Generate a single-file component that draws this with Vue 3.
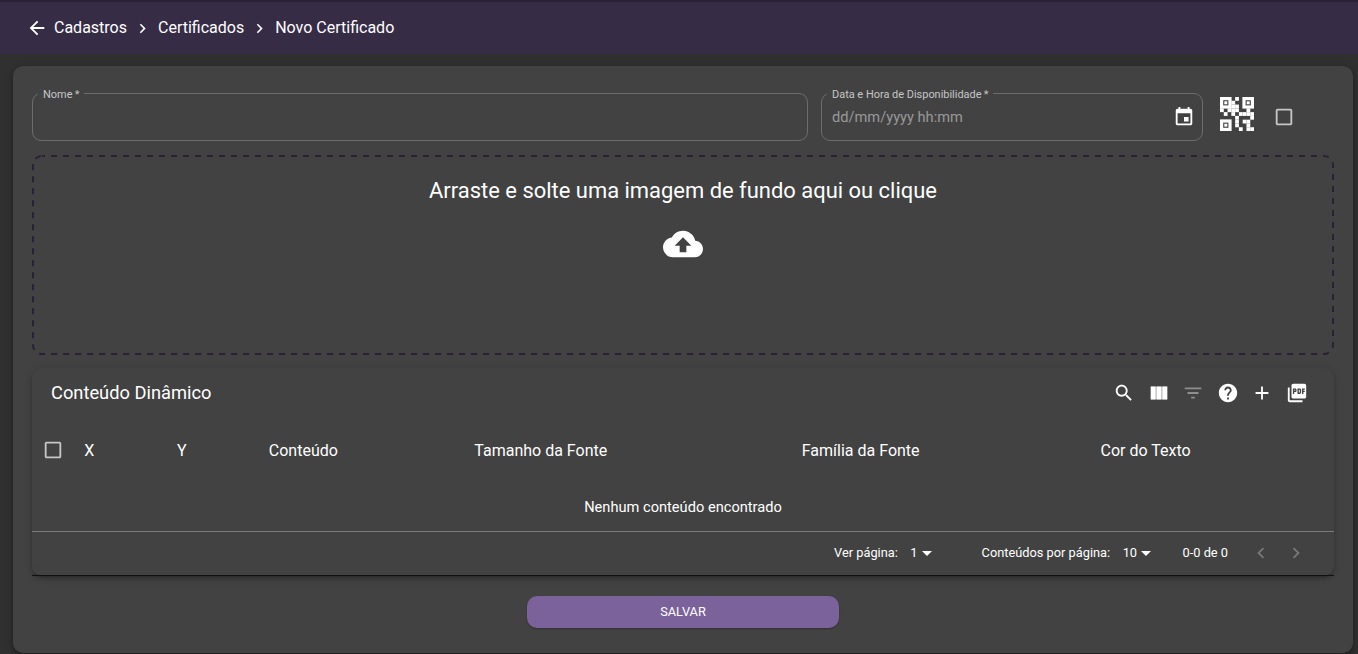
<script setup>
const crumbs = ['Cadastros', 'Certificados', 'Novo Certificado']
const finders = [[0, 0], [22.4, 0], [0, 22.4]]
// Filled QR modules on a 9 x 9 grid, outside the three finder squares
const modules = [
  [4, 0], [3, 1], [3, 2], [4, 2],
  [0, 3], [2, 3], [3, 3], [4, 3], [7, 3],
  [1, 4], [3, 4], [5, 4], [6, 4], [7, 4], [8, 4],
  [4, 5], [8, 5], [4, 6], [6, 6], [7, 6],
  [4, 7], [7, 7], [5, 8], [7, 8], [8, 8]
]
const columns = ['X', 'Y', 'Conteúdo', 'Tamanho da Fonte', 'Família da Fonte', 'Cor do Texto']
const box = 'M19 5v14H5V5h14m0-2H5c-1.100 0-2 .9-2 2v14c0 1.100.9 2 2 2h14c1.100 0 2-.9 2-2V5c0-1.100-.9-2-2-2z'
const tools = [
  { d: 'M15.500 14h-.79l-.28-.27C15.410 12.590 16 11.110 16 9.500 16 5.910 13.090 3 9.500 3S3 5.910 3 9.500 5.910 16 9.500 16c1.610 0 3.090-.59 4.230-1.570l.27.28v.79l5 4.990L20.490 19l-4.990-5zm-6 0C7.010 14 5 11.990 5 9.500S7.010 5 9.500 5 14 7.010 14 9.500 11.990 14 9.500 14z' },
  { d: 'M3 5v14h5.330V5H3zM9.330 5v14h5.330V5H9.330zM15.660 5v14H21V5h-5.340z', columns: true },
  { d: 'M10 18h4v-2h-4v2zM3 6v2h18V6H3zm3 7h12v-2H6v2z', off: true },
  { d: 'M12 2C6.480 2 2 6.480 2 12s4.480 10 10 10 10-4.480 10-10S17.520 2 12 2zm1 17h-2v-2h2v2zm2.070-7.750l-.9.920C13.450 12.900 13 13.500 13 15h-2v-.5c0-1.100.45-2.100 1.170-2.830l1.240-1.260c.37-.36.590-.86.590-1.410 0-1.100-.9-2-2-2s-2 .9-2 2H8c0-2.210 1.790-4 4-4s4 1.790 4 4c0 .88-.36 1.680-.93 2.250z' },
  { d: 'M19 13h-6v6h-2v-6H5v-2h6V5h2v6h6v2z' },
  { d: 'M20 2H8c-1.100 0-2 .9-2 2v12c0 1.100.9 2 2 2h12c1.100 0 2-.9 2-2V4c0-1.100-.9-2-2-2zm-8.500 7.500c0 .83-.67 1.500-1.500 1.500H9v2H7.500V7H10c.83 0 1.500.67 1.500 1.500v1zm5 2c0 .83-.67 1.500-1.500 1.500h-2.500V7H15c.83 0 1.500.67 1.500 1.500v3zm4-3H19v1h1.500V11H19v2h-1.500V7h3v1.500zM9 9.500h1v-1H9v1zM4 6H2v14c0 1.100.9 2 2 2h14v-2H4V6zm10 5.500h1v-3h-1v3z' }
]
</script>

<template>
  <div class="page">
    <header>
      <svg class="back" viewBox="0 0 24 24"><path d="M20 11H7.830l5.590-5.590L12 4l-8 8 8 8 1.410-1.410L7.830 13H20v-2z" /></svg>
      <template v-for="(c, i) in crumbs" :key="c">
        <svg v-if="i" class="sep" viewBox="0 0 24 24"><path d="M10 6L8.590 7.410 13.170 12l-4.580 4.590L10 18l6-6z" /></svg>
        <span>{{ c }}</span>
      </template>
    </header>
    <main>
      <div class="form">
        <fieldset class="name"><legend>Nome&thinsp;*</legend></fieldset>
        <fieldset class="date">
          <legend>Data e Hora de Disponibilidade&thinsp;*</legend>
          <div class="value">
            <span>dd/mm/yyyy hh:mm</span>
            <svg viewBox="0 0 24 24"><path d="M17 12h-5v5h5v-5zM16 1v2H8V1H6v2H5c-1.110 0-1.990.9-1.990 2L3 19c0 1.100.89 2 2 2h14c1.100 0 2-.9 2-2V5c0-1.100-.9-2-2-2h-1V1h-2zm3 18H5V8h14v11z" /></svg>
          </div>
        </fieldset>
        <svg class="qr" viewBox="0 0 34 34">
          <g v-for="f in finders" :key="f.join()" :transform="`translate(${f})`">
            <rect class="ring" x="1.600" y="1.600" width="8.400" height="8.400" />
            <rect x="4.300" y="4.300" width="3" height="3" />
          </g>
          <rect v-for="m in modules" :key="m.join()" :x="m[0] * 3.780" :y="m[1] * 3.780" width="3.800" height="3.800" />
        </svg>
        <svg class="check" viewBox="0 0 24 24"><path :d="box" /></svg>
      </div>
      <section class="drop">
        <svg class="outline" width="1302" height="200"><rect x="1" y="1" width="1300" height="198" rx="9" /></svg>
        <p>Arraste e solte uma imagem de fundo aqui ou clique</p>
        <svg class="cloud" viewBox="0 0 24 24"><path d="M19.350 10.040C18.670 6.590 15.640 4 12 4 9.110 4 6.600 5.640 5.350 8.040 2.340 8.360 0 10.910 0 14c0 3.310 2.690 6 6 6h13c2.760 0 5-2.240 5-5 0-2.640-2.050-4.780-4.650-4.960zM14 13v4h-4v-4H7l5-5 5 5h-3z" /></svg>
      </section>
      <section class="panel">
        <div class="toolbar">
          <h2>Conteúdo Dinâmico</h2>
          <svg v-for="t in tools" :key="t.d" viewBox="0 0 24 24" :class="{ off: t.off }">
            <path v-if="t.columns" class="gaps" d="M3 5h18v14H3z" /><path :d="t.d" />
          </svg>
        </div>
        <div class="heads">
          <svg class="check" viewBox="0 0 24 24"><path :d="box" /></svg>
          <span v-for="c in columns" :key="c">{{ c }}</span>
        </div>
        <div class="empty">Nenhum conteúdo encontrado</div>
        <div class="pager">
          <span>Ver página:</span><span class="p2">1</span><i></i>
          <span class="p3">Conteúdos por página:</span><span class="p4">10</span><i></i>
          <span class="p5">0-0 de 0</span>
          <svg viewBox="0 0 24 24"><path d="M15.410 7.410L14 6l-6 6 6 6 1.410-1.410L10.830 12z" /></svg>
          <svg viewBox="0 0 24 24"><path d="M10 6L8.590 7.410 13.170 12l-4.580 4.590L10 18l6-6z" /></svg>
        </div>
      </section>
      <button>SALVAR</button>
    </main>
  </div>
</template>

<style>
body { background: #303030; overflow: hidden; }
</style>
<style scoped>
.page { height: 654px; font-family: Roboto, sans-serif; color: #fff; overflow: hidden; }
* { box-sizing: border-box; }
svg { fill: currentColor; flex: none; display: block; }
header { height: 54px; background: #372c46; border-top: 2px solid #2a2136; display: flex; align-items: center; padding-left: 26px; font-size: 16px; line-height: 24px; }
.back { width: 22px; height: 22px; margin: 0 6px 0 0; }
.sep { width: 19px; height: 19px; margin: 1px 6px 0 6px; }
main { margin: 12px 5px 0 13px; height: 587px; border-radius: 10px; background: #424242; padding: 22px 19px 0; box-shadow: 0 2px 4px -1px #0003, 0 4px 5px #00000024, 0 1px 10px #0000001f; }
.form { display: flex; height: 53px; }
fieldset { margin: 0; min-width: 0; height: 53px; border: 1px solid #6c6c6c; border-radius: 9px; padding: 0 10px 0 5px; }
.name { width: 776px; margin-right: 13px; }
.date { width: 382px; }
legend { height: 11px; line-height: 13px; font-size: 10.95px; padding: 0 5px; color: #c6c6c6; }
.value { height: 36px; display: flex; align-items: center; justify-content: space-between; padding-left: 5px; font-size: 14.640px; color: #999; }
.value svg { width: 22px; height: 22px; color: #fff; margin-right: -3px; }
.qr { width: 34px; height: 34px; margin: 9px 0 0 17px; }
.ring { fill: none; stroke: #fff; stroke-width: 3.200px; }
.check { width: 22px; height: 22px; color: #c6c6c6; }
.form .check { margin: 18px 0 0 19px; }
.drop { position: relative; margin-top: 14px; height: 200px; padding-top: 22px; text-align: center; }
.outline { position: absolute; inset: 0; fill: none; stroke: #2a2136; stroke-width: 2px; stroke-dasharray: 6 6; stroke-dashoffset: 3px; }
.drop p { margin: 0; font-size: 21.940px; line-height: 28px; }
.cloud { width: 40px; height: 40px; margin: 19px auto 0; }
.panel { margin-top: 13px; height: 208px; border-radius: 10px; box-shadow: 0 3px 3px -2px #0003, 0 3px 4px #00000024, 0 1px 8px #0000001f; }
.toolbar { height: 50px; display: flex; align-items: center; padding: 0 26px 0 19px; }
h2 { margin: -1px auto 0 0; font-weight: 400; font-size: 18.290px; line-height: 22px; }
.toolbar svg { width: 22px; height: 22px; margin-left: 12.600px; }
.off { opacity: .4; }
.gaps { opacity: .5; }
.heads { height: 65px; display: grid; grid-template-columns: 52.200px 92.800px 91.800px 205.500px 327.500px 298.700px 1fr; align-items: center; font-size: 16px; }
.heads .check { margin: -1px 0 0 10px; }
.empty { height: 49px; border-bottom: 1px solid #7b7b7b; font-size: 14.640px; line-height: 49px; text-align: center; }
.pager { height: 44px; border-bottom: 1px solid #111; display: flex; align-items: center; justify-content: flex-end; padding: 0 27px 2px 0; font-size: 12.800px; }
.pager i { border: 5px solid transparent; border-top-color: #fff; border-bottom: 0; margin: 2px 0 0 4px; }
.p2, .p4 { margin-left: 12.500px; }
.p3 { margin-left: 50px; }
.p5 { margin-left: 31.500px; }
.pager svg { width: 22px; height: 22px; color: #787878; margin-left: 13px; }
.pager .p5 + svg { margin-left: 22px; }
button { display: block; width: 312px; height: 32px; margin: 20px auto 0; padding: 0 0 2px; border: 0; border-radius: 10px; background: #7b629a; color: #fff; font: 12.800px Roboto, sans-serif; box-shadow: 0 1px 2px #0004; }
</style>
